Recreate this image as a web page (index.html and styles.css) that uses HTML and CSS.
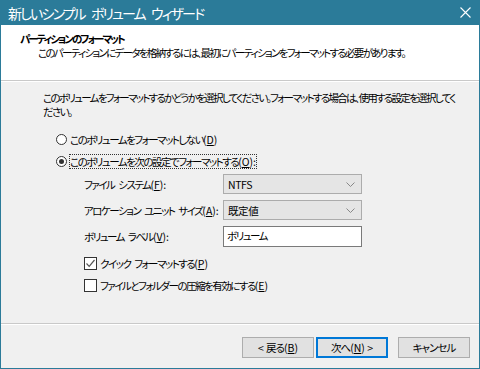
FILE: index.html
```html
<!DOCTYPE html>
<html lang="ja">
<head>
    <meta charset="UTF-8">
    <title>新しいシンプル ボリューム ウィザード</title>
    <link rel="stylesheet" href="styles.css">
</head>
<body>
    <div class="window">
        <div class="titlebar">
            <span class="title">新しいシンプル ボリューム ウィザード</span>
            <span class="close">
                <svg width="11" height="11" viewBox="0 0 11 11"><path d="M0.5 0.5 L10.5 10.5 M10.5 0.5 L0.5 10.5" stroke="#fff" stroke-width="1.1"/></svg>
            </span>
        </div>
        <div class="header">
            <p class="header-title">パーティションのフォーマット</p>
            <p class="header-sub">このパーティションにデータを格納するには、最初にパーティションをフォーマットする必要があります。</p>
        </div>
        <div class="content">
            <p class="intro">このボリュームをフォーマットするかどうかを選択してください。フォーマットする場合は、使用する設定を選択してく<br>ださい。</p>
            <div class="options">
                <div class="radio-row">
                    <span class="radio"></span>
                    <span>このボリュームをフォーマットしない<span class="key">(<u>D</u>)</span></span>
                </div>
                <div class="radio-row">
                    <span class="radio checked"></span>
                    <span class="focus">このボリュームを次の設定でフォーマットする<span class="key">(<u>O</u>):</span></span>
                </div>
            </div>
            <div class="settings">
                <div class="field">
                    <span class="label">ファイル システム<span class="key">(<u>F</u>):</span></span>
                    <span class="select">NTFS<svg width="9" height="5" viewBox="0 0 9 5"><path d="M0.5 0.5 L4.5 4.5 L8.5 0.5" fill="none" stroke="#888"/></svg></span>
                </div>
                <div class="field">
                    <span class="label">アロケーション ユニット サイズ<span class="key">(<u>A</u>):</span></span>
                    <span class="select">既定値<svg width="9" height="5" viewBox="0 0 9 5"><path d="M0.5 0.5 L4.5 4.5 L8.5 0.5" fill="none" stroke="#888"/></svg></span>
                </div>
                <div class="field">
                    <span class="label">ボリューム ラベル<span class="key">(<u>V</u>):</span></span>
                    <span class="textbox">ボリューム</span>
                </div>
                <div class="check-row first">
                    <span class="checkbox">
                        <svg width="11" height="11" viewBox="0 0 11 11"><path d="M1.5 5.5 L4.2 8.3 L9.5 2" fill="none" stroke="#555" stroke-width="1.2"/></svg>
                    </span>
                    <span>クイック フォーマットする<span class="key">(<u>P</u>)</span></span>
                </div>
                <div class="check-row">
                    <span class="checkbox"></span>
                    <span>ファイルとフォルダーの圧縮を有効にする<span class="key">(<u>E</u>)</span></span>
                </div>
            </div>
        </div>
        <div class="footer">
            <button class="button">&lt; 戻る<span class="key">(<u>B</u>)</span></button>
            <button class="button button-default">次へ<span class="key">(<u>N</u>) &gt;</span></button>
            <button class="button button-cancel">キャンセル</button>
        </div>
    </div>
</body>
</html>
```

FILE: styles.css
```css
body {
    margin: 0;
    font-family: "Noto Sans CJK JP", "Noto Sans", sans-serif;
    font-size: 10.5px;
    font-feature-settings: "palt";
    letter-spacing: -1.5px;
    word-spacing: 3px;
    color: #000;
}
p {
    margin: 0;
}
u {
    text-underline-offset: 1px;
}
.key {
    letter-spacing: 0;
    word-spacing: 0;
}
.window {
    width: 480px;
    height: 369px;
    box-sizing: border-box;
    border: 1px solid #2b7b99;
    border-top: none;
    background-color: #f0f0f0;
    display: flex;
    flex-direction: column;
}
.titlebar {
    height: 25px;
    background-color: #2b7b99;
    color: #fff;
    display: flex;
    align-items: center;
    justify-content: space-between;
    padding: 0 9px 0 8px;
    margin: 0 -1px;
}
.title {
    font-size: 14px;
    letter-spacing: -1.9px;
    word-spacing: 5px;
}
.close {
    display: flex;
}
.header {
    height: 56px;
    background-color: #fff;
    border-bottom: 1px solid #c9c9c9;
    box-shadow: 0 1px 0 #fff;
    padding: 7px 0 0 19px;
    box-sizing: border-box;
    white-space: nowrap;
}
.header-title {
    font-weight: bold;
    line-height: 14px;
    letter-spacing: -2px;
}
.header-sub {
    line-height: 14px;
    padding-left: 18px;
    letter-spacing: -1.7px;
}
.content {
    flex: 1;
    padding: 10px 0 0 42px;
    border-bottom: 1px solid #c9c9c9;
    box-shadow: 0 1px 0 #fff;
}
.intro {
    line-height: 14px;
    white-space: nowrap;
    letter-spacing: -1.7px;
}
.options {
    margin-top: 9px;
    margin-left: 13px;
}
.radio-row {
    display: flex;
    align-items: center;
    height: 22px;
}
.radio {
    width: 11px;
    height: 11px;
    border: 1px solid #333;
    border-radius: 50%;
    background: #fff;
    margin-right: 3px;
    box-sizing: border-box;
    position: relative;
    flex: none;
}
.radio.checked::after {
    content: '';
    position: absolute;
    left: 2px;
    top: 2px;
    width: 5px;
    height: 5px;
    border-radius: 50%;
    background: #333;
}
.focus {
    outline: 1px dotted #333;
    line-height: 13px;
}
.settings {
    margin-left: 41px;
    margin-top: -1px;
}
.field {
    display: flex;
    align-items: center;
    height: 26px;
    white-space: nowrap;
}
.label {
    width: 139px;
}
.select {
    width: 139px;
    height: 20px;
    box-sizing: border-box;
    background-color: #e5e5e5;
    border: 1px solid #acacac;
    display: flex;
    align-items: center;
    justify-content: space-between;
    padding: 0 6px 0 4px;
    letter-spacing: -0.4px;
}
.textbox {
    width: 139px;
    height: 21px;
    box-sizing: border-box;
    background-color: #fff;
    border: 1px solid #7a7a7a;
    padding: 1px 3px;
    line-height: 15px;
}
.check-row {
    display: flex;
    align-items: center;
    height: 22px;
    white-space: nowrap;
}
.check-row.first {
    margin-top: 3px;
}
.checkbox {
    width: 13px;
    height: 13px;
    box-sizing: border-box;
    border: 1px solid #333;
    background: #fff;
    margin-right: 3px;
    display: flex;
    align-items: center;
    justify-content: center;
    flex: none;
}
.footer {
    height: 44px;
    display: flex;
    align-items: center;
    padding: 2px 0 0 241px;
    box-sizing: border-box;
}
.button {
    width: 72px;
    height: 21px;
    background-color: #e1e1e1;
    border: 1px solid #adadad;
    font-family: inherit;
    font-size: 10.5px;
    font-feature-settings: "palt";
    padding: 0;
    margin: 0;
    letter-spacing: -1px;
    word-spacing: 2px;
    color: #000;
}
.button-default {
    border-color: #0078d7;
    box-shadow: inset 0 0 0 1px #0078d7;
    margin-left: 2px;
}
.button-cancel {
    margin-left: 10px;
}
```
